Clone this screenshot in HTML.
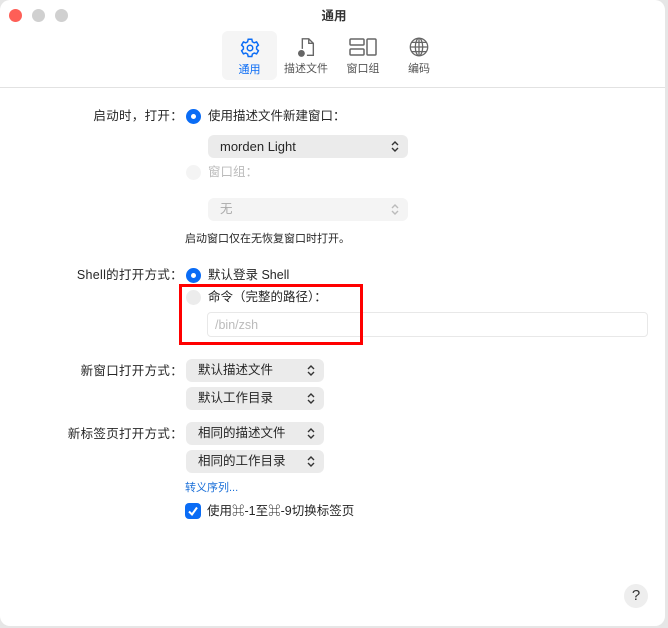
<!DOCTYPE html><html><head><meta charset="utf-8"><style>
body{margin:0;width:668px;height:628px;background:#e6e6e6;position:relative;overflow:hidden;font-family:"Liberation Sans","Noto Sans CJK SC",sans-serif;font-size:12.5px;line-height:16px;color:#262626}
.win{position:absolute;left:0;top:0;width:665px;height:626px;background:#fff;border-radius:10px;overflow:hidden}
.a{position:absolute;white-space:nowrap}
.tl{position:absolute;top:9px;width:13px;height:13px;border-radius:50%;background:#d0d0d0}
.sep{position:absolute;left:0;right:0;top:87px;height:1px;background:#e2e2e2}
.tab{position:absolute;top:31px;height:49px;text-align:center;font-size:11px;line-height:14px;color:#555}
.radio{position:absolute;width:15px;height:15px;border-radius:50%;background:#0a6cf5}
.radio:after{content:"";position:absolute;left:5px;top:5px;width:5px;height:5px;border-radius:50%;background:#fff}
.rd{position:absolute;width:15px;height:15px;border-radius:50%;background:#ececec}
.pop{position:absolute;background:#ebebeb;border-radius:6px;height:23px;line-height:23px;padding-left:12px;box-sizing:border-box}
.pop svg{position:absolute;right:9px;top:6px}
.lbl{position:absolute;right:482px;text-align:right;white-space:nowrap;letter-spacing:0.3px}
</style></head><body><div class="win">
<div class="tl" style="left:9px;background:#fe5f57;border:0"></div>
<div class="tl" style="left:32px"></div>
<div class="tl" style="left:55px"></div>
<div class="a" style="left:0;width:668px;text-align:center;top:8px;font-weight:bold;font-size:12.5px;color:#333">通用</div>
<div class="tab" style="left:222px;width:55px;background:#f5f5f5;border-radius:6px;color:#0a6cf5">
<svg width="22" height="22" viewBox="0 0 24 24" style="margin-top:6px" fill="none" stroke="#0a6cf5" stroke-width="1.6"><path d="M10 2.5h4l.6 2.7 2 1.1 2.6-.9 2 3.4-2 1.9v2.4l2 1.9-2 3.4-2.6-.9-2 1.1-.6 2.7h-4l-.6-2.7-2-1.1-2.6.9-2-3.4 2-1.9v-2.4l-2-1.9 2-3.4 2.6.9 2-1.1z"/><circle cx="12" cy="12" r="3"/></svg>
<div>通用</div></div>
<div class="tab" style="left:282px;width:48px"><svg width="22" height="22" viewBox="0 0 24 24" style="margin-top:5px" fill="none" stroke="#666" stroke-width="1.5"><path d="M8 14V3h7l5 5v13h-7"/><path d="M15 3v5h5"/><circle cx="7" cy="19" r="3" fill="#666"/></svg><div>描述文件</div></div>
<div class="tab" style="left:342px;width:42px"><svg width="30" height="22" viewBox="0 0 30 22" style="margin-top:5px" fill="none" stroke="#666" stroke-width="1.5"><rect x="2" y="3" width="14" height="6" rx="1"/><rect x="2" y="13" width="14" height="6" rx="1"/><rect x="19" y="3" width="9" height="16" rx="1"/></svg><div>窗口组</div></div>
<div class="tab" style="left:400px;width:38px"><svg width="22" height="22" viewBox="0 0 24 24" style="margin-top:5px" fill="none" stroke="#666" stroke-width="1.4"><circle cx="12" cy="12" r="9.5"/><ellipse cx="12" cy="12" rx="4" ry="9.5"/><path d="M2.5 12h19M4 7h16M4 17h16M12 2.5v19"/></svg><div>编码</div></div>
<div class="sep"></div>

<div class="lbl" style="top:108px">启动时，打开：</div>
<div class="radio" style="left:186px;top:109px"></div>
<div class="a" style="left:208px;top:108px">使用描述文件新建窗口：</div>
<div class="pop" style="left:208px;top:135px;width:200px;font-size:13px">morden Light<svg width="8" height="11" viewBox="0 0 8 11" fill="none" stroke="#333" stroke-width="1.4"><path d="M1 4l3-3 3 3M1 7l3 3 3-3"/></svg></div>
<div class="rd" style="left:186px;top:165px;background:#f4f4f4"></div>
<div class="a" style="left:208px;top:164px;color:#bbb">窗口组：</div>
<div class="pop" style="left:208px;top:198px;width:200px;background:#f4f4f4;color:#aaa">无<svg width="8" height="11" viewBox="0 0 8 11" fill="none" stroke="#bbb" stroke-width="1.4"><path d="M1 4l3-3 3 3M1 7l3 3 3-3"/></svg></div>
<div class="a" style="left:185px;top:231px;font-size:11px">启动窗口仅在无恢复窗口时打开。</div>

<div class="lbl" style="top:267px">Shell的打开方式：</div>
<div class="radio" style="left:186px;top:268px"></div>
<div class="a" style="left:208px;top:267px">默认登录 Shell</div>
<div class="rd" style="left:186px;top:290px"></div>
<div class="a" style="left:208px;top:289px">命令（完整的路径）：</div>
<div class="a" style="left:207px;top:312px;width:441px;height:25px;border:1px solid #e8e8e8;border-radius:4px;color:#bbb;line-height:25px;padding-left:7px;box-sizing:border-box">/bin/zsh</div>
<div class="a" style="left:179px;top:284px;width:184px;height:61px;border:3px solid #f00;box-sizing:border-box"></div>

<div class="lbl" style="top:363px">新窗口打开方式：</div>
<div class="pop" style="left:186px;top:359px;width:138px">默认描述文件<svg width="8" height="11" viewBox="0 0 8 11" fill="none" stroke="#333" stroke-width="1.4"><path d="M1 4l3-3 3 3M1 7l3 3 3-3"/></svg></div>
<div class="pop" style="left:186px;top:387px;width:138px">默认工作目录<svg width="8" height="11" viewBox="0 0 8 11" fill="none" stroke="#333" stroke-width="1.4"><path d="M1 4l3-3 3 3M1 7l3 3 3-3"/></svg></div>
<div class="lbl" style="top:426px">新标签页打开方式：</div>
<div class="pop" style="left:186px;top:422px;width:138px">相同的描述文件<svg width="8" height="11" viewBox="0 0 8 11" fill="none" stroke="#333" stroke-width="1.4"><path d="M1 4l3-3 3 3M1 7l3 3 3-3"/></svg></div>
<div class="pop" style="left:186px;top:450px;width:138px">相同的工作目录<svg width="8" height="11" viewBox="0 0 8 11" fill="none" stroke="#333" stroke-width="1.4"><path d="M1 4l3-3 3 3M1 7l3 3 3-3"/></svg></div>
<div class="a" style="left:185px;top:480px;font-size:11px;color:#1a6fd8">转义序列...</div>
<div class="a" style="left:185px;top:503px;width:16px;height:16px;border-radius:4px;background:#0a6cf5"><svg width="16" height="16" viewBox="0 0 16 16" fill="none" stroke="#fff" stroke-width="2"><path d="M4 8.5l3 3 5-7"/></svg></div>
<div class="a" style="left:207px;top:503px">使用⌘-1至⌘-9切换标签页</div>
<div class="a" style="left:624px;top:584px;width:24px;height:24px;border-radius:50%;background:#eee;text-align:center;line-height:24px;font-size:15px;color:#333">?</div>
</div></body></html>
